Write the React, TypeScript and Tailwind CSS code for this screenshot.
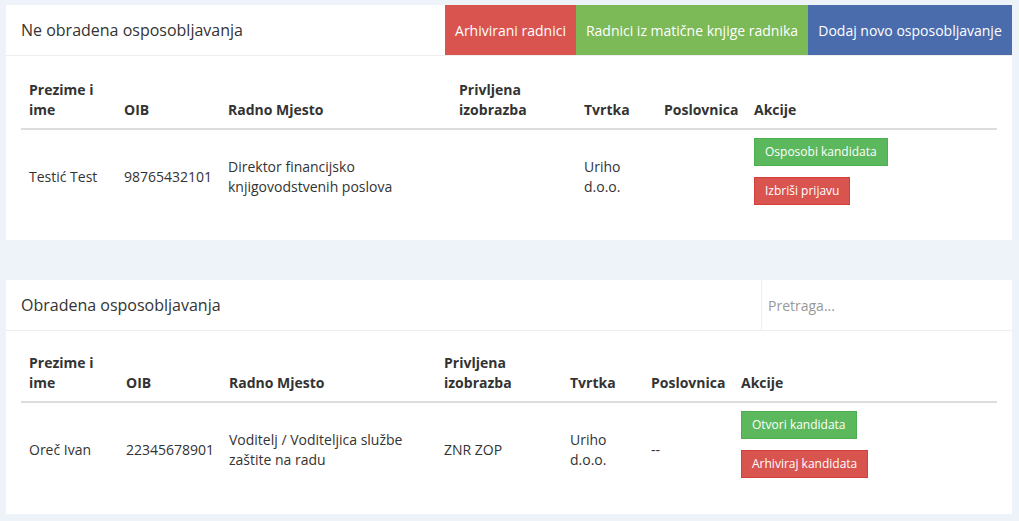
import React from 'react'

type Row = {
  name: string
  oib: string
  job: string[]
  edu: string
  company: string[]
  branch: string
  actions: { label: string; color: 'green' | 'red' }[]
}

const columns = ['Prezime i ime', 'OIB', 'Radno Mjesto', 'Privljena izobrazba', 'Tvrtka', 'Poslovnica', 'Akcije']

const pendingRows: Row[] = [
  {
    name: 'Testić Test',
    oib: '98765432101',
    job: ['Direktor financijsko', 'knjigovodstvenih poslova'],
    edu: '',
    company: ['Uriho', 'd.o.o.'],
    branch: '',
    actions: [
      { label: 'Osposobi kandidata', color: 'green' },
      { label: 'Izbriši prijavu', color: 'red' },
    ],
  },
]

const doneRows: Row[] = [
  {
    name: 'Oreč Ivan',
    oib: '22345678901',
    job: ['Voditelj / Voditeljica službe', 'zaštite na radu'],
    edu: 'ZNR ZOP',
    company: ['Uriho', 'd.o.o.'],
    branch: '--',
    actions: [
      { label: 'Otvori kandidata', color: 'green' },
      { label: 'Arhiviraj kandidata', color: 'red' },
    ],
  },
]

function ActionButton({ label, color }: { label: string; color: 'green' | 'red' }) {
  const colorClasses = {
    green: 'bg-[#5cb85c] border-[#4cae4c]',
    red: 'bg-[#d9534f] border-[#d43f3a]',
  }
  return (
    <div className="mb-[11px]">
      <button className={`h-[28px] px-[10px] border text-[12px] text-white leading-none ${colorClasses[color]}`}>
        {label}
      </button>
    </div>
  )
}

function DataTable({ rows, widths }: { rows: Row[]; widths: string[] }) {
  return (
    <table className="w-full table-fixed border-collapse text-[14px] leading-[20px] text-[#333]">
      <colgroup>
        {widths.map((w, i) => (
          <col key={i} className={w} />
        ))}
      </colgroup>
      <thead>
        <tr className="border-b-2 border-[#ddd]">
          {columns.map(c => (
            <th key={c} className="px-2 py-2 text-left align-bottom font-bold">
              {c}
            </th>
          ))}
        </tr>
      </thead>
      <tbody>
        {rows.map(r => (
          <tr key={r.oib}>
            <td className="px-2 py-2 align-middle">{r.name}</td>
            <td className="px-2 py-2 align-middle">{r.oib}</td>
            <td className="px-2 py-2 align-middle">
              {r.job.map(l => (
                <div key={l}>{l}</div>
              ))}
            </td>
            <td className="px-2 py-2 align-middle">{r.edu}</td>
            <td className="px-2 py-2 align-middle">
              {r.company.map(l => (
                <div key={l}>{l}</div>
              ))}
            </td>
            <td className="px-2 py-2 align-middle">{r.branch}</td>
            <td className="px-2 py-2 align-middle">
              {r.actions.map(a => (
                <ActionButton key={a.label} label={a.label} color={a.color} />
              ))}
            </td>
          </tr>
        ))}
      </tbody>
    </table>
  )
}

export default function App() {
  return (
    <div
      className="min-h-screen bg-[#eef2f9] pl-[6px] pr-[7px] pt-[5px] pb-[8px]"
      style={{ fontFamily: '"Open Sans", "Noto Sans", sans-serif' }}
    >
      {/* Pending trainings */}
      <div className="bg-white">
        <div className="flex h-[51px] items-stretch border-b border-[#eee]">
          <div className="flex flex-1 items-center pl-[15px] text-[16px] text-[#333]">Ne obradena osposobljavanja</div>
          <div className="flex h-[50px]">
            <button className="w-[131px] bg-[#d9534f] text-[14px] text-white">Arhivirani radnici</button>
            <button className="w-[232px] bg-[#7cb957] text-[14px] text-white">Radnici iz matične knjige radnika</button>
            <button className="w-[204px] bg-[#4a6cad] text-[14px] text-white">Dodaj novo osposobljavanje</button>
          </div>
        </div>
        <div className="px-[15px] pt-[16px] pb-[16px]">
          <DataTable
            rows={pendingRows}
            widths={['w-[95px]', 'w-[104px]', 'w-[231px]', 'w-[125px]', 'w-[80px]', 'w-[90px]', 'w-[251px]']}
          />
        </div>
      </div>

      {/* Processed trainings */}
      <div className="mt-[40px] bg-white">
        <div className="flex h-[51px] items-stretch border-b border-[#eee]">
          <div className="flex flex-1 items-center pl-[15px] text-[16px] text-[#333]">Obradena osposobljavanja</div>
          <input
            placeholder="Pretraga..."
            className="h-[50px] w-[251px] border-l border-[#eee] pl-[6px] text-[14px] text-[#333] outline-none placeholder:text-[#999]"
          />
        </div>
        <div className="px-[15px] pt-[14px] pb-[17px]">
          <DataTable
            rows={doneRows}
            widths={['w-[97px]', 'w-[103px]', 'w-[215px]', 'w-[126px]', 'w-[81px]', 'w-[90px]', 'w-[264px]']}
          />
        </div>
      </div>
    </div>
  )
}
